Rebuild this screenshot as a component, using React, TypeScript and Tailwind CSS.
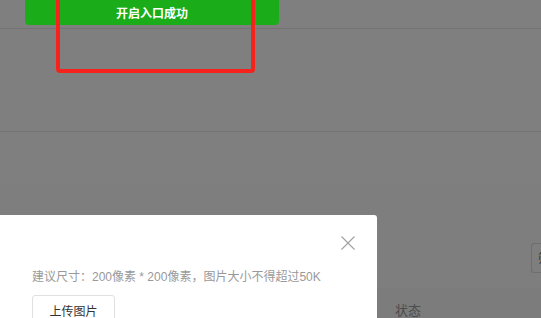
import React from "react";

export default function App() {
  const font = { fontFamily: '"Noto Sans CJK SC", "Noto Sans", sans-serif' };
  return (
    <div className="relative w-[541px] h-[318px] overflow-hidden bg-white" style={font}>
      {/* underlying page */}
      <div className="flex flex-col w-full">
        <div className="h-[29px] border-b border-[#e6e6e6]" />
        <div className="h-[103px] border-b border-[#e6e6e6]" />
        <div className="h-[51px]" />
        <div className="h-[105px] bg-[#fcfcfc] flex justify-end items-start pt-[60px]">
          <div className="w-[10px] h-[30px] border border-[#dcdcdc] rounded-l-[3px] border-r-0 flex items-center pl-[6px] overflow-hidden text-[12px] text-[#666]">筛</div>
        </div>
        <div className="h-[60px] bg-[#f6f9f7] flex items-start pl-[395px] pt-[12px] text-[13px] text-[#999]">状态</div>
      </div>

      {/* overlay */}
      <div className="absolute inset-0 bg-black/50" />

      {/* modal */}
      <div className="absolute left-0 top-[215px] w-[377px] h-[120px] bg-white rounded-tr-[3px] flex flex-col items-start pl-[32px] pt-[54px]">
        <svg className="absolute left-[341px] top-[21px]" width="14" height="14" viewBox="0 0 14 14">
          <path d="M0.5 0.5 L13.5 13.5 M13.5 0.5 L0.5 13.5" stroke="#a0a0a0" strokeWidth="1.1" fill="none" />
        </svg>
        <div
          className="text-[12px] leading-[16px] text-[#999] whitespace-nowrap"
          style={{ fontFamily: '"Liberation Sans", "Noto Sans CJK SC", sans-serif' }}
        >
          建议尺寸：200像素 * 200像素，图片大小不得超过50K
        </div>
        <div className="mt-[10px] w-[83px] h-[32px] border border-[#e0e0e0] rounded-[3px] flex items-center justify-center text-[12px] text-[#333]">
          上传图片
        </div>
      </div>

      {/* toast */}
      <div className="absolute left-[25px] top-0 w-[254px] h-[25px] bg-[#1aad19] rounded-b-[4px] flex items-center justify-center text-white text-[12px] font-bold">
        开启入口成功
      </div>

      {/* annotation */}
      <div className="absolute left-[56px] top-[-6px] w-[199px] h-[79px] border-[4px] border-[#f5231b] rounded-[4px]" />
    </div>
  );
}
